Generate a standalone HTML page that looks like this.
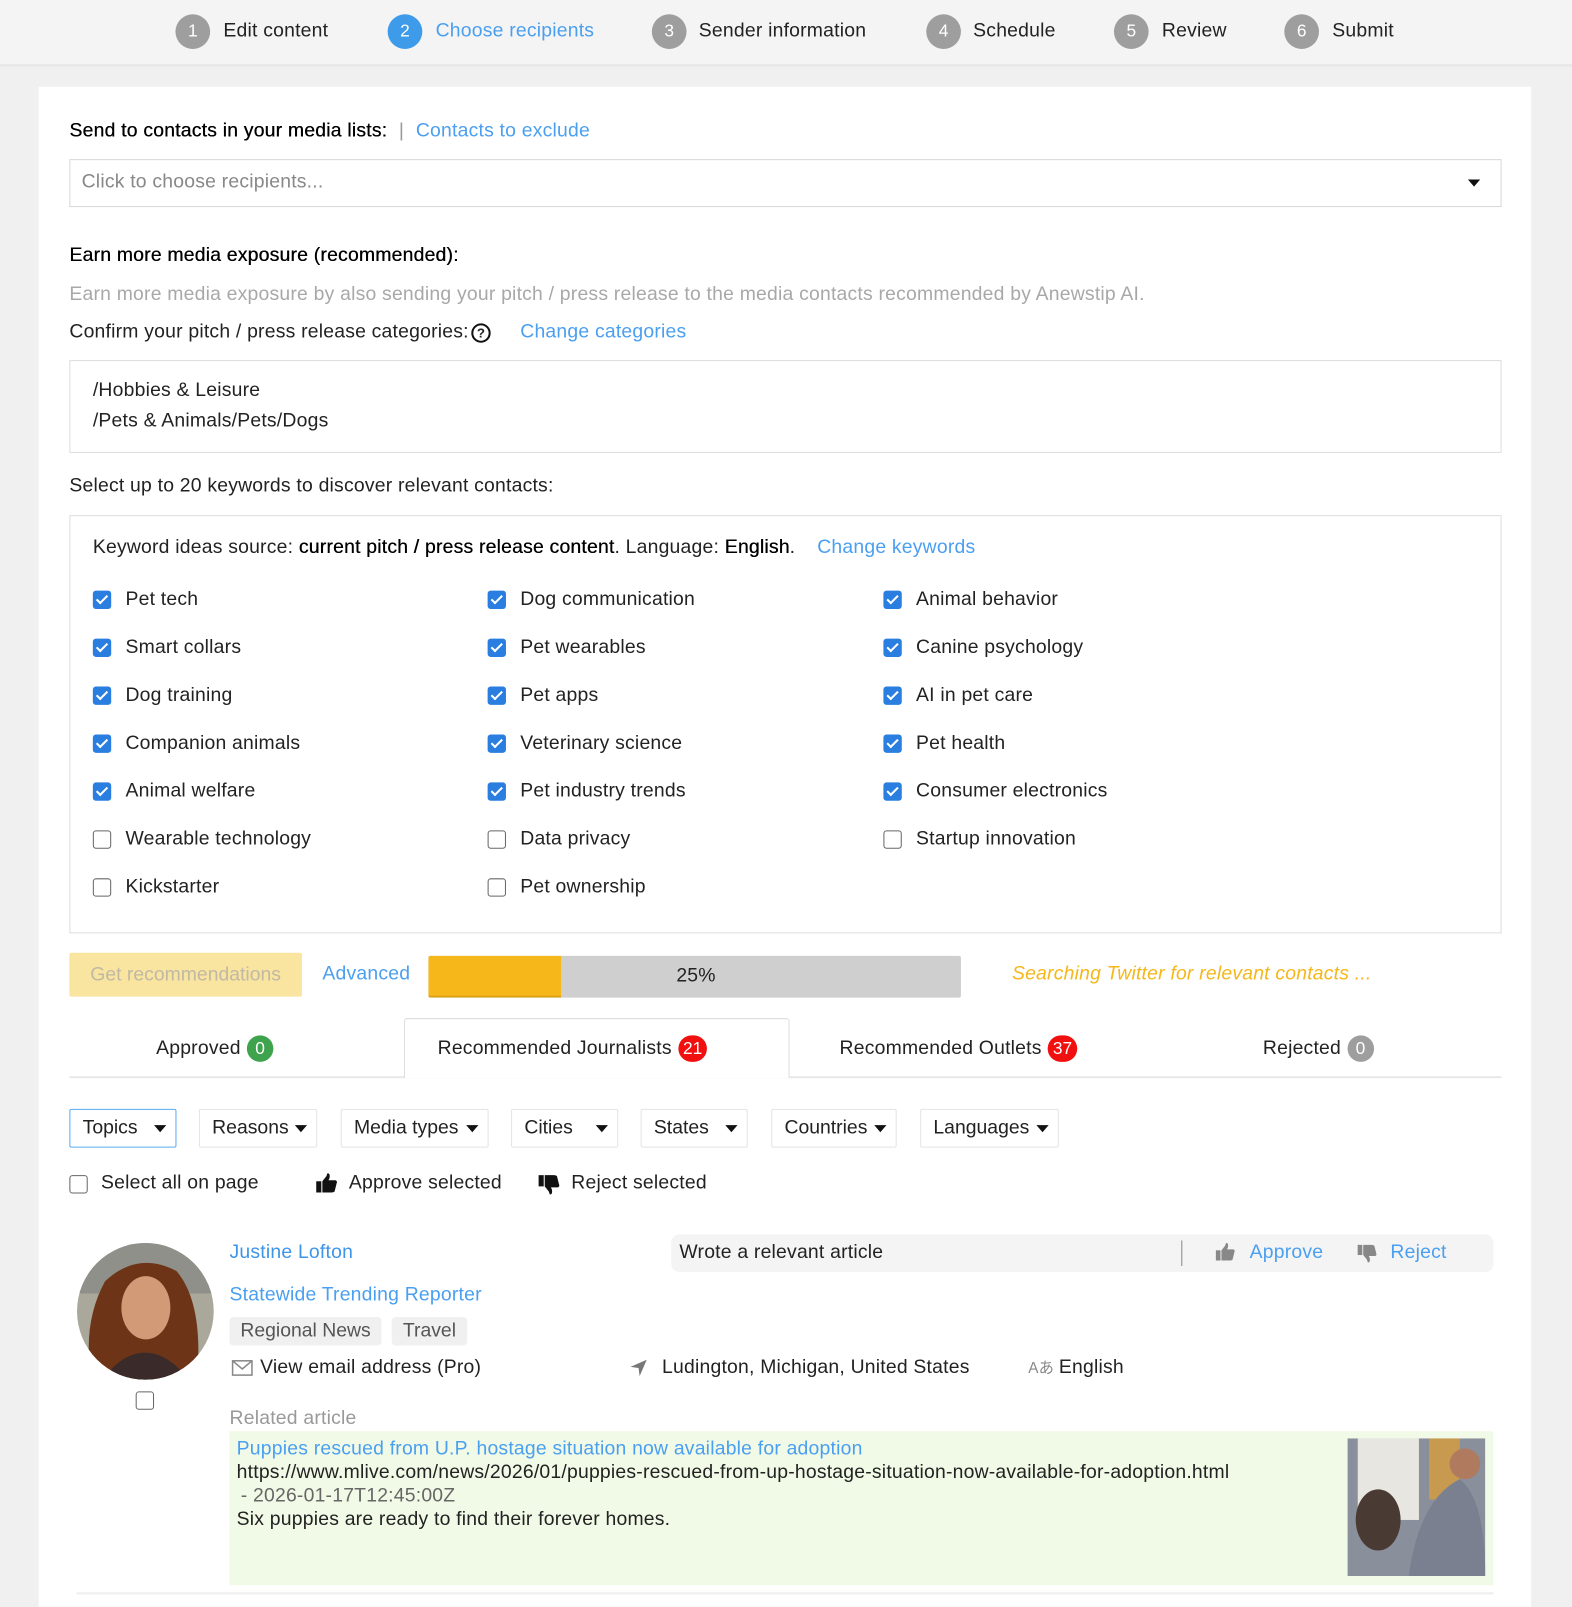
<!DOCTYPE html>
<html><head><meta charset="utf-8">
<style>
*{box-sizing:border-box;margin:0;padding:0}
html,body{width:1572px;height:1600px;overflow:hidden;background:#f0f0f0}
body{font-family:"Liberation Sans",Arial,sans-serif;color:#222}
#w{position:absolute;left:0;top:0;width:1541px;height:1568px;transform:scale(1.0201);transform-origin:0 0;background:#f0f0f0}
.a{position:absolute;white-space:nowrap}
.t{font-size:19px;line-height:22px;letter-spacing:0.2px;transform:translateY(-11px)}
.blue{color:#4a9ff0}
.circ{position:absolute;width:34px;height:34px;border-radius:50%;background:#9e9e9e;color:#fff;font-size:17px;line-height:34px;text-align:center;top:14px}
.box{position:absolute;border:1px solid #ddd;background:#fff}
.cb{position:absolute;width:18px;height:18px;border-radius:3px;background:#2a7ee0;transform:translateY(-9px)}
.cb:after{content:"";position:absolute;left:6px;top:2px;width:4px;height:9px;border:solid #fff;border-width:0 2.5px 2.5px 0;transform:rotate(45deg)}
.cu{position:absolute;width:18px;height:18px;border-radius:3px;border:1.5px solid #666;background:#fff;transform:translateY(-9px)}
.flt{position:absolute;top:1087px;height:38px;border:1px solid #e4e4e4;border-radius:2px;font-size:19px;line-height:36px;padding-left:12px}
.flt:after{content:"";position:absolute;right:9px;top:15px;border:6px solid transparent;border-top:7px solid #111;border-bottom:0}
.badge{display:inline-block;min-width:26px;height:26px;border-radius:13px;color:#fff;font-size:17px;line-height:26px;text-align:center;padding:0 5px;vertical-align:middle;margin-left:6px;letter-spacing:0}
.sb{text-shadow:0.3px 0 0 #000;color:#000}
</style></head><body><div id="w">
<div class="a" style="left:0;top:0;width:1541px;height:65px;background:#f4f4f4;border-bottom:2px solid #e6e6e6"></div>
<div class="circ" style="left:172px">1</div><div class="a t" style="left:219px;top:31px">Edit content</div>
<div class="circ" style="left:380px;background:#3d9be9">2</div><div class="a t blue" style="left:427px;top:31px">Choose recipients</div>
<div class="circ" style="left:639px">3</div><div class="a t" style="left:685px;top:31px">Sender information</div>
<div class="circ" style="left:908px">4</div><div class="a t" style="left:954px;top:31px">Schedule</div>
<div class="circ" style="left:1092px">5</div><div class="a t" style="left:1139px;top:31px">Review</div>
<div class="circ" style="left:1259px">6</div><div class="a t" style="left:1306px;top:31px">Submit</div>

<div class="a" style="left:38px;top:85px;width:1463px;height:1490px;background:#fff"></div>
<div class="a t sb" style="left:68px;top:129px">Send to contacts in your media lists: <span style="color:#999;margin:0 6px;text-shadow:none">|</span> <span class="blue" style="text-shadow:none">Contacts to exclude</span></div>
<div class="box" style="left:68px;top:156px;width:1404px;height:47px;border-color:#d8d8d8"></div>
<div class="a t" style="left:80px;top:179px;color:#888">Click to choose recipients...</div>
<div class="a" style="left:1439px;top:176px;border:6px solid transparent;border-top:7px solid #111;border-bottom:0"></div>

<div class="a t sb" style="left:68px;top:251px">Earn more media exposure (recommended):</div>
<div class="a t" style="left:68px;top:289px;color:#a8a8a8">Earn more media exposure by also sending your pitch / press release to the media contacts recommended by Anewstip AI.</div>
<div class="a t" style="left:68px;top:326px">Confirm your pitch / press release categories:</div>
<div class="a" style="left:462px;top:317px;width:19px;height:19px;border:2px solid #111;border-radius:50%;font-size:13px;font-weight:bold;line-height:15px;text-align:center">?</div>
<div class="a t blue" style="left:510px;top:326px">Change categories</div>
<div class="box" style="left:68px;top:353px;width:1404px;height:91px"></div>
<div class="a t" style="left:91px;top:383px">/Hobbies &amp; Leisure</div>
<div class="a t" style="left:91px;top:413px">/Pets &amp; Animals/Pets/Dogs</div>
<div class="a t" style="left:68px;top:477px">Select up to 20 keywords to discover relevant contacts:</div>
<div class="box" style="left:68px;top:505px;width:1404px;height:410px"></div>
<div class="a t" style="left:91px;top:537px">Keyword ideas source: <span class="sb">current pitch / press release content</span>. Language: <span class="sb">English</span>. <span class="blue" style="margin-left:16px">Change keywords</span></div>

<div class="cb" style="left:91px;top:588px"></div><div class="a t" style="left:123px;top:588px">Pet tech</div>
<div class="cb" style="left:478px;top:588px"></div><div class="a t" style="left:510px;top:588px">Dog communication</div>
<div class="cb" style="left:866px;top:588px"></div><div class="a t" style="left:898px;top:588px">Animal behavior</div>
<div class="cb" style="left:91px;top:635px"></div><div class="a t" style="left:123px;top:635px">Smart collars</div>
<div class="cb" style="left:478px;top:635px"></div><div class="a t" style="left:510px;top:635px">Pet wearables</div>
<div class="cb" style="left:866px;top:635px"></div><div class="a t" style="left:898px;top:635px">Canine psychology</div>
<div class="cb" style="left:91px;top:682px"></div><div class="a t" style="left:123px;top:682px">Dog training</div>
<div class="cb" style="left:478px;top:682px"></div><div class="a t" style="left:510px;top:682px">Pet apps</div>
<div class="cb" style="left:866px;top:682px"></div><div class="a t" style="left:898px;top:682px">AI in pet care</div>
<div class="cb" style="left:91px;top:729px"></div><div class="a t" style="left:123px;top:729px">Companion animals</div>
<div class="cb" style="left:478px;top:729px"></div><div class="a t" style="left:510px;top:729px">Veterinary science</div>
<div class="cb" style="left:866px;top:729px"></div><div class="a t" style="left:898px;top:729px">Pet health</div>
<div class="cb" style="left:91px;top:776px"></div><div class="a t" style="left:123px;top:776px">Animal welfare</div>
<div class="cb" style="left:478px;top:776px"></div><div class="a t" style="left:510px;top:776px">Pet industry trends</div>
<div class="cb" style="left:866px;top:776px"></div><div class="a t" style="left:898px;top:776px">Consumer electronics</div>
<div class="cu" style="left:91px;top:823px"></div><div class="a t" style="left:123px;top:823px">Wearable technology</div>
<div class="cu" style="left:478px;top:823px"></div><div class="a t" style="left:510px;top:823px">Data privacy</div>
<div class="cu" style="left:866px;top:823px"></div><div class="a t" style="left:898px;top:823px">Startup innovation</div>
<div class="cu" style="left:91px;top:870px"></div><div class="a t" style="left:123px;top:870px">Kickstarter</div>
<div class="cu" style="left:478px;top:870px"></div><div class="a t" style="left:510px;top:870px">Pet ownership</div>

<div class="a" style="left:68px;top:934px;width:228px;height:43px;background:#f9e4a0;border-radius:2px;color:#c0b9a4;font-size:19px;line-height:43px;text-align:center">Get recommendations</div>
<div class="a t blue" style="left:316px;top:955px">Advanced</div>
<div class="a" style="left:420px;top:937px;width:522px;height:41px;background:#cfcfcf;border-radius:2px"></div>
<div class="a" style="left:420px;top:937px;width:130px;height:41px;background:#f5b719;border-radius:2px 0 0 2px;border-bottom:2px solid #d9a010"></div>
<div class="a t" style="left:663px;top:957px">25%</div>
<div class="a t" style="left:992px;top:955px;color:#f5b719;font-style:italic">Searching Twitter for relevant contacts ...</div>

<div class="a" style="left:68px;top:1055px;width:1404px;height:2px;background:#e8e8e8"></div>
<div class="a" style="left:396px;top:998px;width:378px;height:59px;background:#fff;border:1px solid #ddd;border-bottom:none;border-radius:3px 3px 0 0"></div>
<div class="a t" style="left:153px;top:1026px">Approved<span class="badge" style="background:#3fa34d">0</span></div>
<div class="a t" style="left:429px;top:1026px">Recommended Journalists<span class="badge" style="background:#f01010">21</span></div>
<div class="a t" style="left:823px;top:1026px">Recommended Outlets<span class="badge" style="background:#f01010">37</span></div>
<div class="a t" style="left:1238px;top:1026px">Rejected<span class="badge" style="background:#9e9e9e">0</span></div>

<div class="flt" style="left:68px;width:105px;border-color:#5aaaf0">Topics</div>
<div class="flt" style="left:195px;width:116px">Reasons</div>
<div class="flt" style="left:334px;width:145px">Media types</div>
<div class="flt" style="left:501px;width:105px">Cities</div>
<div class="flt" style="left:628px;width:105px">States</div>
<div class="flt" style="left:756px;width:123px">Countries</div>
<div class="flt" style="left:902px;width:136px">Languages</div>

<div class="cu" style="left:68px;top:1161px"></div><div class="a t" style="left:99px;top:1160px">Select all on page</div>
<svg class="a" style="left:309px;top:1150px" width="22" height="20" viewBox="0 0 22 20"><rect x="1" y="8" width="5" height="11" fill="#111"/><path d="M7 8 L11 3 L12 0 Q15 0 14 5 L13 7 L20 7 Q22 8 21 10 L19 18 Q18 19 16 19 L7 19Z" fill="#111"/></svg>
<div class="a t" style="left:342px;top:1160px">Approve selected</div>
<svg class="a" style="left:527px;top:1151px" width="22" height="20" viewBox="0 0 22 20" transform="scale(1,-1)"><rect x="1" y="8" width="5" height="11" fill="#111"/><path d="M7 8 L11 3 L12 0 Q15 0 14 5 L13 7 L20 7 Q22 8 21 10 L19 18 Q18 19 16 19 L7 19Z" fill="#111"/></svg>
<div class="a t" style="left:560px;top:1160px">Reject selected</div>

<svg class="a" style="left:75px;top:1218px" width="135" height="135" viewBox="0 0 135 135">
<defs><clipPath id="c"><circle cx="67.5" cy="67.5" r="67"/></clipPath></defs>
<g clip-path="url(#c)"><rect width="135" height="135" fill="#a9a89a"/><rect y="0" width="135" height="50" fill="#8e9089"/>
<path d="M15 135 Q5 80 28 38 Q60 8 98 28 Q125 60 118 135Z" fill="#6e3418"/>
<ellipse cx="68" cy="64" rx="24" ry="31" fill="#d39a78"/>
<path d="M25 135 Q45 108 67 108 Q90 108 110 135Z" fill="#3a2a2a"/></g></svg>
<div class="cu" style="left:133px;top:1373px"></div>

<div class="a t" style="left:225px;top:1228px;color:#3d94e8">Justine Lofton</div>
<div class="a t blue" style="left:225px;top:1270px">Statewide Trending Reporter</div>
<div class="a" style="left:225px;top:1291px;width:149px;height:28px;background:#f0f0f0;border-radius:4px;color:#555;font-size:19px;line-height:28px;text-align:center">Regional News</div>
<div class="a" style="left:384px;top:1291px;width:74px;height:28px;background:#f0f0f0;border-radius:4px;color:#555;font-size:19px;line-height:28px;text-align:center">Travel</div>
<svg class="a" style="left:227px;top:1333px" width="21" height="16" viewBox="0 0 21 16"><rect x="1" y="1" width="19" height="14" fill="none" stroke="#888" stroke-width="1.5"/><path d="M1 1 L10.5 9 L20 1" fill="none" stroke="#888" stroke-width="1.5"/></svg>
<div class="a t" style="left:255px;top:1341px">View email address (Pro)</div>
<svg class="a" style="left:617px;top:1332px" width="18" height="18" viewBox="0 0 18 18"><path d="M17 1 L1 8 L9 9 L10 17Z" fill="#777"/></svg>
<div class="a t" style="left:649px;top:1341px">Ludington, Michigan, United States</div>
<div class="a t" style="left:1008px;top:1341px;color:#888;font-size:15px">A<span style="font-family:'Noto Sans CJK JP',sans-serif">あ</span></div>
<div class="a t" style="left:1038px;top:1341px">English</div>

<div class="a" style="left:658px;top:1210px;width:806px;height:37px;background:#f4f4f4;border-radius:8px"></div>
<div class="a t" style="left:666px;top:1228px">Wrote a relevant article</div>
<div class="a" style="left:1158px;top:1216px;width:1px;height:25px;background:#888"></div>
<svg class="a" style="left:1191px;top:1218px" width="20" height="19" viewBox="0 0 22 20"><rect x="1" y="8" width="5" height="11" fill="#888"/><path d="M7 8 L11 3 L12 0 Q15 0 14 5 L13 7 L20 7 Q22 8 21 10 L19 18 Q18 19 16 19 L7 19Z" fill="#888"/></svg>
<div class="a t blue" style="left:1225px;top:1228px">Approve</div>
<svg class="a" style="left:1330px;top:1219px" width="20" height="19" viewBox="0 0 22 20" transform="scale(1,-1)"><rect x="1" y="8" width="5" height="11" fill="#888"/><path d="M7 8 L11 3 L12 0 Q15 0 14 5 L13 7 L20 7 Q22 8 21 10 L19 18 Q18 19 16 19 L7 19Z" fill="#888"/></svg>
<div class="a t blue" style="left:1363px;top:1228px">Reject</div>

<div class="a t" style="left:225px;top:1391px;color:#999">Related article</div>
<div class="a" style="left:225px;top:1403px;width:1239px;height:151px;background:#f1fae6"></div>
<div class="a t blue" style="left:232px;top:1421px">Puppies rescued from U.P. hostage situation now available for adoption</div>
<div class="a t" style="left:232px;top:1444px">https://www.mlive.com/news/2026/01/puppies-rescued-from-up-hostage-situation-now-available-for-adoption.html</div>
<div class="a t" style="left:236px;top:1467px;color:#666">- 2026-01-17T12:45:00Z</div>
<div class="a t" style="left:232px;top:1490px">Six puppies are ready to find their forever homes.</div>
<svg class="a" style="left:1321px;top:1410px" width="135" height="135" viewBox="0 0 135 135"><rect width="135" height="135" fill="#8a8f9c"/><rect x="10" y="0" width="60" height="80" fill="#e8e6e0"/><rect x="80" y="0" width="30" height="60" fill="#c89a50"/><ellipse cx="30" cy="80" rx="22" ry="30" fill="#4a3a34"/><path d="M60 135 Q70 60 110 40 Q135 60 135 135Z" fill="#7a8090"/><circle cx="115" cy="25" r="15" fill="#b07a5e"/></svg>
<div class="a" style="left:75px;top:1561px;width:1389px;height:2px;background:#eee"></div>
</div></body></html>
